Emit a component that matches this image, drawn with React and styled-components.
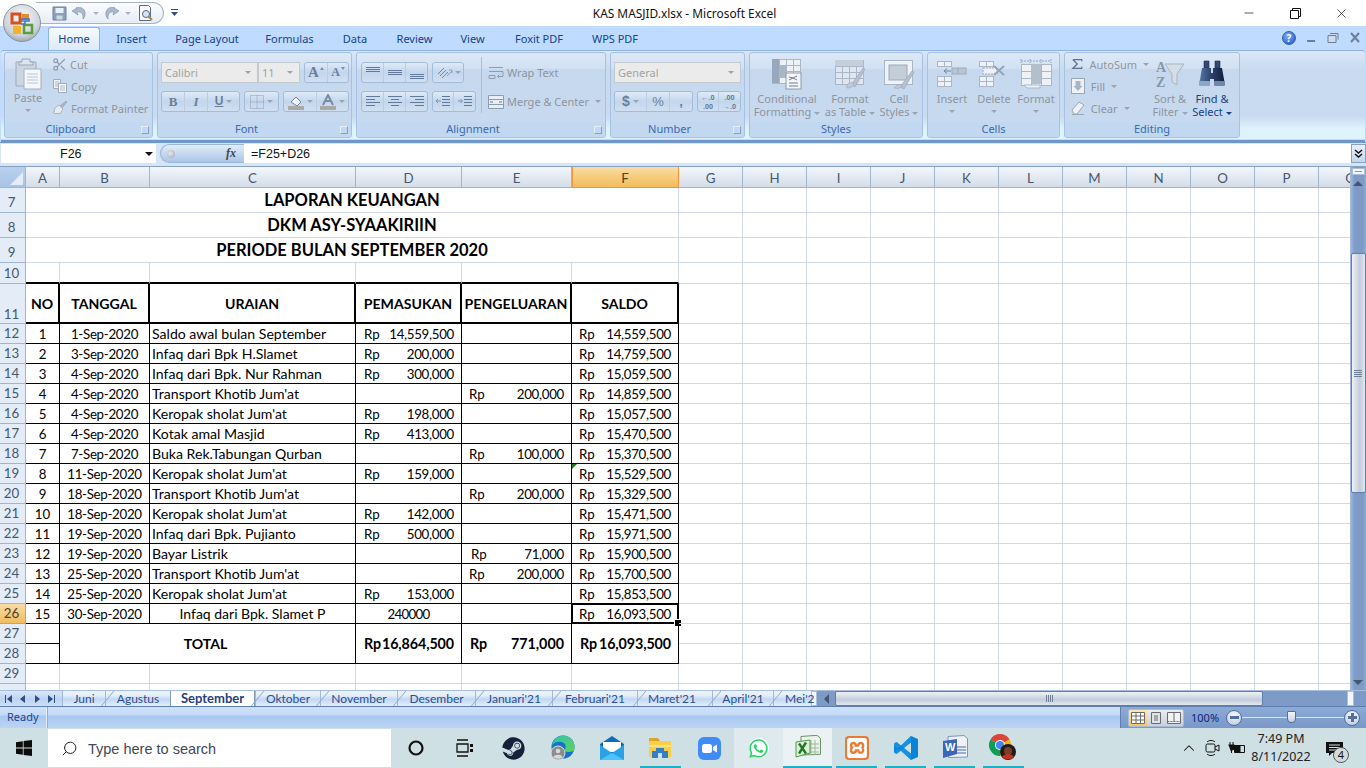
import React from 'react';
import styled, { createGlobalStyle, css } from 'styled-components';
import { FaWhatsapp, FaSteam } from 'react-icons/fa';
import { SiXampp } from 'react-icons/si';
import { Scissors, Minus, X, Search, ChevronUp } from 'lucide-react';

const UI = '"Noto Sans", sans-serif';
const SHEET = 'Lato, "Liberation Sans", sans-serif';

const Global = createGlobalStyle`
  html, body { margin: 0; padding: 0; background: #bfdbff; overflow: hidden; }
  #root { width: 1366px; height: 768px; }
  * { box-sizing: border-box; }
`;

const Page = styled.div`
  width: 1366px; height: 768px; display: flex; flex-direction: column; position: relative; overflow: hidden;
  font-family: ${UI}; background: #bfdbff;
`;

/* ---------- title bar ---------- */
const TitleBar = styled.div`
  height: 26px; background: #fff; display: flex; align-items: center; position: relative; flex: none;
`;
const Orb = styled.svg`position: absolute; left: 3px; top: 4px; z-index: 5;`;
const Qat = styled.div`
  margin-left: 36px; height: 22px; width: 128px; border: 1px solid #a9b4c2; border-left: none; border-radius: 0 12px 12px 0;
  background: linear-gradient(#fbfcfe, #e6edf6); display: flex; align-items: center; padding-left: 14px;
`;
const QatSlot = styled.span`display: flex; align-items: center; justify-content: center; width: ${p => p.$w}px; height: 20px;`;
const QatMore = styled.span`margin-left: 6px; display: flex;`;
const Title = styled.div`
  position: absolute; left: 0; right: 0; top: 5px; text-align: center; font-size: 11.9px; line-height: 17px; color: #111; padding-left: 3px; pointer-events: none;
`;
const WinBtns = styled.div`margin-left: auto; display: flex; padding-right: 2px;`;
const WinBtn = styled.span`width: 46px; height: 26px; display: flex; align-items: center; justify-content: center; color: #111;`;

/* ---------- ribbon tabs ---------- */
const TabRow = styled.div`height: 24px; flex: none; background: #bfdbff; display: flex; padding-left: 48px; align-items: flex-end; position: relative;`;
const RibbonTab = styled.div`
  width: ${p => p.$w}px; margin-right: ${p => p.$mr || 0}px; height: 23px; text-align: center; font-size: 11px; line-height: 23px; color: #15428b;
  ${p => p.$on && css`
    background: linear-gradient(#f7fbff, #dce9f8); border: 1px solid #8db2e3; border-bottom: none; border-radius: 3px 3px 0 0; line-height: 21px;
  `}
`;
const HelpArea = styled.div`margin-left: auto; display: flex; align-items: center; height: 24px; padding-right: 4px; gap: 9px;`;
const HelpDot = styled.span`
  width: 14px; height: 14px; border-radius: 50%; background: radial-gradient(circle at 40% 35%, #7fb0f5, #1a4fc4); border: 1px solid #2b5fc0; color: #fff;
  font: bold 10px/12px ${UI}; text-align: center;
`;

/* ---------- ribbon ---------- */
const Ribbon = styled.div`
  height: 92px; flex: none; margin: 0 1px 0 1px; padding: 1px 3px 0 3px; display: flex; gap: 4px;
  background: linear-gradient(#d9e7f7 0, #c9dbf0 20%, #c9dbf0 72%, #dff3fb 86%, #dff3fb 97%, #6f97cb 98%); border-radius: 3px 3px 0 0; border-top: 1px solid #8db2e3;
`;
const Group = styled.div`
  width: ${p => p.$w}px; height: 86px; flex: none; border: 1px solid #a6c1e2; border-radius: 3px; display: flex; flex-direction: column; overflow: hidden;
  background: linear-gradient(#dde8f6, #d3e1f2 18%, #c6d8ee 20%, #c8daef);
`;
const GroupBody = styled.div`flex: 1; display: flex; position: relative; min-height: 0;`;
const GroupLabel = styled.div`
  height: 15px; flex: none; background: #c1d8f0; text-align: center; font-size: 11px; line-height: 14px; color: #3a6ab0; position: relative;
  padding-right: ${p => p.$launch ? 16 : 0}px;
`;
const Launcher = styled.span`position: absolute; right: 3px; bottom: 3px; width: 8px; height: 8px; border: 1px solid #8aa2bf; border-left-color: #e8eef6; border-top-color: #e8eef6;`;
const SmallCol = styled.div`display: flex; flex-direction: column; padding: 0 0 0 ${p => p.$pl || 0}px; width: ${p => p.$w ? `${p.$w}px` : 'auto'};`;
const SmallRow = styled.div`
  height: 22px; display: flex; align-items: center; gap: 3px; font-size: 11px; color: #8e959e; white-space: nowrap;
`;
const BigBtn = styled.div`
  width: ${p => p.$w}px; margin-left: ${p => p.$ml || 0}px; flex: none; display: flex; flex-direction: column; align-items: center; font-size: 11px; line-height: 13px;
  color: ${p => p.$on ? '#15428b' : '#8e959e'}; padding-top: ${p => p.$pt ?? 4}px; white-space: nowrap; text-align: center;
`;
const BigIcon = styled.div`height: ${p => p.$h || 34}px; display: flex; align-items: center; justify-content: center; flex: none;`;
const BigLabel = styled.span`margin-top: ${p => p.$mt ?? 1}px;`;
const Caret = styled.span`
  display: inline-block; width: 0; height: 0; border: 3px solid transparent; border-top: 3px solid ${p => p.$on ? '#15428b' : '#98a4b4'}; border-bottom: none; margin-left: ${p => p.$ml ?? 3}px; vertical-align: middle; flex: none;
`;
const CaretLine = styled.div`height: 12px; display: flex; align-items: center; justify-content: center;`;
const Toolbox = styled.div`display: flex; flex-direction: column; gap: 8px; padding: 9px 0 0 ${p => p.$pl ?? 3}px;`;
const ToolRow = styled.div`display: flex; gap: ${p => p.$gap ?? 4}px; height: 21px;`;
const Combo = styled.div`
  width: ${p => p.$w}px; height: 21px; background: #ebebeb; border: 1px solid #c3c9d0; display: flex; align-items: center; justify-content: space-between; padding: 0 6px 0 3px;
  font-size: 11px; color: #a3a3a3; margin-left: ${p => p.$ml || 0}px;
`;
const BtnGroup = styled.div`
  display: flex; height: 21px; border: 1px solid #a5bcd9; border-radius: 3px; background: linear-gradient(#dfeaf7, #c3d6ed 50%, #d0e0f2); overflow: hidden; margin-left: ${p => p.$ml || 0}px;
`;
const Seg = styled.div`
  width: ${p => p.$w || 23}px; flex: none; display: flex; align-items: center; justify-content: center; border-right: 1px solid #bccde2; color: #6b7f99;
  font: ${p => p.$font || `bold 13px/19px "Liberation Serif", serif`};
  &:last-child { border-right: none; }
`;
const TinyTri = styled.span`
  width: 0; height: 0; border: 2.5px solid transparent; margin: 0 0 8px 1px;
  ${p => p.$down ? css`border-top: 3px solid #7d8ea6; border-bottom: none;` : css`border-bottom: 3px solid #7d8ea6; border-top: none;`}
`;
const Divider = styled.div`width: 1px; height: 56px; background: #aebdd0; margin: 4px 6px 0 5px; flex: none;`;
const DisabledRow = styled.div`height: 21px; display: flex; align-items: center; gap: 3px; font-size: 11px; color: #8e959e; white-space: nowrap;`;
const MiniStack = styled.span`font: 700 7px/9px ${UI}; color: #6b7f99; text-align: center; white-space: nowrap;`;
const NoteLetter = styled.text`font-family: "Liberation Serif", serif; font-weight: 700;`;

/* ---------- formula bar ---------- */
const FormulaBar = styled.div`
  height: 25px; flex: none; display: flex; padding: 1px 0 3px 0; background: #d5e4f6; border-bottom: 1px solid #87a2c1; align-items: stretch; border-top: 1px solid #6f97cb;
`;
const NameBox = styled.div`
  width: 155px; margin-left: 1px; background: #fff; display: flex; align-items: center; justify-content: space-between; padding: 0 3px 0 59px; font: 12.5px "Liberation Sans", sans-serif; color: #111;
`;
const DownTri = styled.span`width: 0; height: 0; border: 4px solid transparent; border-top: 4px solid #111; border-bottom: none;`;
const FxPill = styled.div`
  width: 84px; margin-left: 4px; border-radius: 11px 0 0 11px; background: linear-gradient(#e2edf9, #a9c5e8); border: 1px solid #9bb6d6; border-right: none; display: flex; align-items: center; justify-content: space-between; padding: 0 8px 0 6px;
`;
const FxDot = styled.span`width: 8px; height: 8px; border-radius: 50%; background: radial-gradient(circle at 40% 40%, #e8e8e8, #9aa7b7);`;
const FxText = styled.span`font: italic bold 12px "Liberation Serif", serif; color: #3c4652;`;
const FormulaInput = styled.div`
  flex: 1; background: #fff; font: 12.5px "Liberation Sans", sans-serif; color: #111; display: flex; align-items: center; padding-left: 7px;
`;
const Expand = styled.div`width: 15px; background: linear-gradient(#e9f0f9, #c3d6ed); border: 1px solid #87a2c1; display: flex; align-items: center; justify-content: center; flex: none;`;

/* ---------- sheet ---------- */
const SheetArea = styled.div`flex: 1; display: flex; min-height: 0; background: #fff; position: relative;`;
const GridWrap = styled.div`flex: 1; overflow: hidden; min-width: 0;`;
const SheetGrid = styled.div`
  display: grid; width: 1400px;
  grid-template-columns: 26px 34px 90px 206px 106px 110px 107px repeat(10, 64px) 64px;
  grid-template-rows: 21px 25px 25px 25px 21px 40px repeat(18, 20px) 20px;
  font-family: ${SHEET}; font-size: 13.3px; color: #000;
`;
const Corner = styled.div`
  border-right: 1px solid #9eb6ce; border-bottom: 1px solid #9eb6ce; display: flex; align-items: flex-end; justify-content: flex-end; padding: 2px;
  background: linear-gradient(#b9d1ee, #a7c3e6);
`;
const CornerTri = styled.span`width: 0; height: 0; border-style: solid; border-width: 0 0 13px 13px; border-color: transparent transparent #e4ecf7 transparent;`;
const ColHead = styled.div`
  display: flex; align-items: center; justify-content: center; border-right: 1px solid #9eb6ce; border-bottom: 1px solid #9eb6ce;
  background: linear-gradient(#f4f7fb, #e5ebf3 45%, #d4dce8); color: #44586f; padding-top: 1px; overflow: hidden;
  ${p => p.$on && css`
    background: linear-gradient(#f9dca6, #f5c974 60%, #f1bc5c); border-right-color: #f29536; border-bottom-color: #f29536; box-shadow: inset 1px 0 #f29536; color: #4a4030;
  `}
`;
const RowHead = styled.div`
  display: flex; align-items: flex-end; justify-content: center; border-right: 1px solid #9eb6ce; border-bottom: 1px solid #9eb6ce; padding-bottom: ${p => p.$pb ?? 1}px; padding-right: 2px;
  background: #e4ecf7; color: #44586f; line-height: 17px;
  ${p => p.$on && css`background: linear-gradient(#f9dca6, #f1bc5c); border-right-color: #f29536; border-bottom-color: #f29536; color: #4a4030;`}
`;
const Cell = styled.div`
  display: flex; align-items: center; min-width: 0; white-space: nowrap; position: relative; overflow: visible;
  justify-content: ${p => p.$align || 'flex-start'};
  padding: 0 ${p => p.$pr ?? 0}px ${p => p.$pbm ?? 0}px ${p => p.$pl ?? 0}px;
  border-right: ${p => p.$r ? `${p.$r}px solid #000` : '1px solid #d0d7e5'};
  border-bottom: ${p => p.$b ? `${p.$b}px solid #000` : '1px solid #d0d7e5'};
  grid-column: span ${p => p.$cs || 1}; grid-row: span ${p => p.$rs || 1};
  font-weight: ${p => p.$bold ? 700 : 400};
  font-size: ${p => p.$fs ? `${p.$fs}px` : 'inherit'};
  letter-spacing: ${p => p.$ls ?? 0}px;
  ${p => p.$acct && css`justify-content: space-between;`}
  ${p => p.$note && css`&::before { content: ''; position: absolute; left: 0; top: 0; border-style: solid; border-width: 5px 5px 0 0; border-color: #1f7a1f transparent transparent transparent; }`}
`;
const Amount = styled.span`letter-spacing: ${p => p.$ls ?? -0.3}px;`;
const Selection = styled.span`
  position: absolute; left: -1px; top: -1px; right: -1px; bottom: -1px; border: 2px solid #000; pointer-events: none;
`;
const FillHandle = styled.span`
  position: absolute; right: -3px; bottom: -3px; width: 6px; height: 6px; background: #000; border: 1px solid #fff; box-sizing: content-box; margin: -1px;
`;

const VScroll = styled.div`
  width: 16px; flex: none; background: linear-gradient(90deg, #a6bedf, #7d9bc6 30%, #7d9bc6 80%, #90abd1); display: flex; flex-direction: column; align-items: center; position: relative; height: 523px;
`;
const SplitBox = styled.div`width: 13px; height: 7px; margin-top: 1px; background: #f4f8fc; border: 1px solid #a9bfdc; display: flex; align-items: center; justify-content: center;`;
const SplitLine = styled.span`width: 7px; height: 1px; background: #7d9bc6;`;
const TriUp = styled.span`width: 0; height: 0; border: 5px solid transparent; border-top: none; border-bottom: 5px solid #46566c; margin-top: 6px;`;
const TriDown = styled.span`width: 0; height: 0; border: 5px solid transparent; border-bottom: none; border-top: 5px solid #46566c; margin-top: auto; margin-bottom: 5px;`;
const VThumb = styled.div`
  width: 15px; height: 240px; margin-top: 67px; border: 1px solid #5f7ea8; border-radius: 2px; display: flex; align-items: center; justify-content: center; flex: none;
  background: linear-gradient(90deg, #eef1f6, #cfd6e2 45%, #c2ccdb 60%, #e3e7ee);
`;
const Grip = styled.span`width: 8px; height: 7px; background: repeating-linear-gradient(#6f7f95 0 1px, transparent 1px 2px);`;

/* ---------- sheet tabs ---------- */
const TabBar = styled.div`
  height: 17px; flex: none; display: flex; background: linear-gradient(#dbe7f7, #bcd3f2 55%, #cfdff5); border-top: 1px solid #a7bfdf; border-bottom: 1px solid #5d7fb0; position: relative; overflow: hidden;
`;
const NavArrows = styled.div`width: 62px; flex: none; display: flex; align-items: center; padding-left: 5px; gap: 6px; color: #2d4e80;`;
const SheetTab = styled.div`
  width: ${p => p.$w}px; flex: none; position: relative; text-align: ${p => p.$left ? 'left' : 'center'}; font-size: 12px; line-height: 15px; color: #2a4f92; font-family: ${SHEET};
  padding: 0 ${p => p.$pr || 0}px 0 ${p => p.$pl || 0}px; white-space: nowrap;
  background: linear-gradient(#eef4fb, #e3edf9 30%, #c2d7f3 55%, #e4eefa);
  border-left: 1px solid #a2b9d8;
  ${p => p.$on && css`background: #fff; font-weight: 700; color: #1f3f7f; font-size: 13px; border-left: 1px solid #7f9db9; border-right: 1px solid #7f9db9;`}
`;
const TabSlant = styled.span`
  position: absolute; left: -6px; bottom: -1px; width: 1px; height: 18px; background: #8fa9cb; transform: skewX(-40deg); transform-origin: bottom;
`;
const MiniSplit = styled.div`width: 6px; flex: none; background: #f4f8fc; border: 1px solid #a9bfdc;`;
const HScroll = styled.div`flex: 1; background: #7d9bc6; display: flex; align-items: center; padding-left: 3px; position: relative;`;
const TriLeft = styled.span`width: 0; height: 0; border: 5px solid transparent; border-left: none; border-right: 5px solid #46566c; margin-left: 4px;`;
const TriRight = styled.span`width: 0; height: 0; border: 5px solid transparent; border-right: none; border-left: 5px solid #46566c; margin-left: auto; margin-right: 13px;`;
const HThumb = styled.div`
  width: 428px; height: 15px; margin-left: 6px; border-radius: 2px; display: flex; align-items: center; justify-content: center; border: 1px solid #5f7ea8;
  background: linear-gradient(#eef1f6, #cfd6e2 45%, #c2ccdb 60%, #e3e7ee);
`;
const HGrip = styled.span`width: 7px; height: 7px; background: repeating-linear-gradient(90deg, #6f7f95 0 1px, transparent 1px 2px);`;
const HSplit = styled.span`position: absolute; right: 12px; top: 0; width: 7px; height: 15px; background: #f4f8fc; border: 1px solid #a9bfdc;`;

/* ---------- status ---------- */
const StatusBar = styled.div`
  height: 21px; flex: none; display: flex; align-items: stretch; background: linear-gradient(#cfe1fa, #c6dbf8 35%, #a9c8f0 45%, #bcd4f5); font-size: 11px; color: #24448a;
`;
const Ready = styled.div`width: 47px; border-right: 1px solid #e4eefb; padding-left: 7px; line-height: 20px; box-shadow: 1px 0 #8eaed8;`;
const StatusRight = styled.div`
  margin-left: auto; width: 246px; display: flex; align-items: center; padding-left: 7px; background: linear-gradient(#8dabd6, #7998c8); border-left: 1px solid #5d7fb0;
`;
const ViewBtns = styled.div`display: flex; height: 18px; border-radius: 2px; overflow: hidden; border: 1px solid #a6bcd9;`;
const ViewBtn = styled.span`width: 18px; display: flex; align-items: center; justify-content: center; background: ${p => p.$on ? 'linear-gradient(#fde9b0,#f6c55f)' : 'linear-gradient(#e9edf3,#c7d0dc)'};`;
const ZoomPct = styled.span`margin-left: 7px; color: #10267a; font-size: 11px; width: 33px;`;
const RoundBtn = styled.span`
  width: 16px; height: 16px; border-radius: 50%; border: 1px solid #53709c; background: radial-gradient(circle at 50% 30%, #f6f8fb, #b9c8dd); display: flex; align-items: center; justify-content: center; margin-left: ${p => p.$ml || 0}px; flex: none;
`;
const Track = styled.span`width: 102px; height: 1px; background: #dbe6f5; position: relative; flex: none;`;
const Knob = styled.span`position: absolute; left: 45px; top: -6px; width: 9px; height: 12px; background: linear-gradient(#f5f7fa,#c2cfdf); border: 1px solid #53709c; border-radius: 1px 1px 4px 4px;`;

/* ---------- taskbar ---------- */
const Taskbar = styled.div`height: 40px; flex: none; background: #cfe0e4; display: flex; align-items: stretch;`;
const StartBtn = styled.div`width: 48px; display: flex; align-items: center; justify-content: center;`;
const SearchBox = styled.div`width: 343px; margin: 1px 0; background: #fff; display: flex; align-items: center; padding: 1px 0 0 13px; gap: 10px; font: 14.5px "Liberation Sans", sans-serif; color: #3e4a55;`;
const Tile = styled.div`
  width: 49px; flex: none; display: flex; align-items: center; justify-content: center; position: relative;
  background: ${p => p.$bg || 'transparent'}; padding-top: ${p => p.$pt ?? 0}px;
  ${p => p.$run && css`&::after { content: ''; position: absolute; left: ${p.$wide ? 0 : 4}px; right: ${p.$wide ? 0 : 4}px; bottom: 0; height: 2px; background: #1fb0c4; }`}
`;
const Tray = styled.div`margin-left: auto; display: flex; align-items: center; color: #111;`;
const TrayIcon = styled.span`width: ${p => p.$w || 24}px; display: flex; align-items: center; justify-content: center;`;
const Clock = styled.div`width: 70px; margin-left: -3px; text-align: center; font-size: 12.5px; line-height: 18px; color: #222;`;
const Notif = styled.div`width: 50px; height: 40px; position: relative; padding: 12px 0 0 10px;`;
const NotifBadge = styled.span`position: absolute; left: 17px; top: 19px; width: 16px; height: 16px; border-radius: 50%; background: #d2dcdf; border: 1px solid #555; font: 11px/14px ${UI}; text-align: center; color: #111;`;

/* ---------- icons ---------- */
const G = '#8f9db0';
const PasteIcon = () => (
  <svg width="28" height="33" viewBox="0 0 28 33">
    <path d="M2 5h20v24H2z" fill="#ccd6e3" stroke="#9dabbd" />
    <path d="M8 5V2h8v3h3v3H5V5z" fill="#dde4ed" stroke="#98a6b9" />
    <path d="M10 12h17v20H10z" fill="#f3f6fa" stroke="#a4b1c2" />
    <path d="M13 17h11M13 20h11M13 23h11M13 26h11" stroke="#bcc6d3" />
  </svg>
);
const CopyIcon = () => (
  <svg width="16" height="16" viewBox="0 0 16 16">
    <path d="M1.5 1.5h7v9h-7z" fill="#eef2f7" stroke="#9dabbd" /><path d="M3 4h4M3 6h4M3 8h4" stroke="#aeb9c8" />
    <path d="M6.5 5.5h8v9h-8z" fill="#f6f8fb" stroke="#9dabbd" /><path d="M8 8h5M8 10h5M8 12h5" stroke="#aeb9c8" />
  </svg>
);
const BrushIcon = ({ s = 16 }) => (
  <svg width={s} height={s} viewBox="0 0 16 16">
    <path d="M8 6l6-5 1 1-5 6z" fill="#aab6c6" stroke="#8f9db0" strokeWidth=".6" />
    <path d="M3 8l4-3 4 4-3 5-2-1-1 1-1-1-1 1-2-2 2-1-1-1z" fill="#e6ebf2" stroke="#9dabbd" strokeWidth=".8" />
  </svg>
);
const Lines = ({ kind, valign = 'center' }) => {
  const y0 = valign === 'top' ? 2 : valign === 'bottom' ? 9 : 5;
  const list = kind === 'v'
    ? [0, 2, 4].map(i => [1, y0 + i, 15])
    : [0, 3, 6, 9].map(i => {
        const short = i % 6 === 3;
        if (kind === 'l') return [1, 2 + i, short ? 10 : 15];
        if (kind === 'r') return [short ? 6 : 1, 2 + i, 15];
        return [short ? 4 : 1, 2 + i, short ? 12 : 15];
      });
  return (
    <svg width="16" height="15" viewBox="0 0 16 15">
      {list.map(([a, y, b], i) => <path key={i} d={`M${a} ${y + .5}H${b}`} stroke="#62799a" />)}
    </svg>
  );
};
const IndentIcon = ({ out }) => (
  <svg width="16" height="15" viewBox="0 0 16 15">
    <path d="M7 2.5h8M7 5.5h8M7 8.5h8M7 11.5h8" stroke="#62799a" />
    <path d={out ? 'M6 7H1M3 5L1 7l2 2' : 'M1 7h4M3.5 5l2 2-2 2'} stroke="#7f95b3" fill="none" />
  </svg>
);
const OrientIcon = () => (
  <svg width="18" height="15" viewBox="0 0 18 15">
    <path d="M2 9l6-6M4 11l6-6M6 13l6-6" stroke="#78879a" /><path d="M11 11l5-5M13 5h3v3" stroke="#8ba2c0" fill="none" />
  </svg>
);
const WrapIcon = () => (
  <svg width="16" height="16" viewBox="0 0 16 16">
    <path d="M1 2.5h14M1 6.5h11M1 10.5h6v3H1z" stroke="#8e9cb0" fill="none" />
    <path d="M12 6.5h3v5h-5M11.5 9.5L9.5 11.5l2 1.5" stroke="#8e9cb0" fill="none" />
  </svg>
);
const MergeIcon = () => (
  <svg width="16" height="14" viewBox="0 0 16 14">
    <path d="M.5.5h15v13H.5zM.5 4.5h15M.5 9.5h15" stroke="#8e9cb0" fill="#e8eef6" />
    <path d="M2 7h3M14 7h-3" stroke="#64788f" />
  </svg>
);
const CellGrid = ({ x = 0, y = 0, c = 3, r = 3, w = 8, h = 6, fill = '#eef2f7', stroke = '#a9b7c8' }) => (
  <g>
    {Array.from({ length: c * r }).map((_, i) => (
      <rect key={i} x={x + (i % c) * w + .5} y={y + Math.floor(i / c) * h + .5} width={w} height={h} fill={fill} stroke={stroke} />
    ))}
  </g>
);
const CondIcon = () => (
  <svg width="32" height="32" viewBox="0 0 32 32">
    <CellGrid x={1} y={1} c={4} r={4} w={7} h={6} />
    <rect x="1" y="1" width="7" height="24" fill="#98a7ba" /><rect x="8" y="7" width="7" height="12" fill="#a9b6c6" />
    <rect x="15" y="15" width="15" height="16" fill="#f3f6fa" stroke="#8d9bad" />
    <path d="M18 19l4 1-4 2M26 18l-4 2 4 2M18 25h9M18 28h9" stroke="#6f7e92" fill="none" />
  </svg>
);
const TableIcon = () => (
  <svg width="32" height="32" viewBox="0 0 32 32">
    <CellGrid x={1} y={2} c={4} r={4} w={7} h={6} fill="#e0e6ee" />
    <rect x="1" y="2" width="28" height="6" fill="#c5cfdb" />
    <path d="M17 27l12-17 2 1-10 18z" fill="#b6c1cf" stroke="#96a4b6" strokeWidth=".6" />
    <path d="M13 27c2-3 5-3 7-2-1 3-2 5-7 5z" fill="#bfc9d6" stroke="#9aa7b8" strokeWidth=".6" />
  </svg>
);
const StyleIcon = () => (
  <svg width="32" height="32" viewBox="0 0 32 32">
    <rect x="1.5" y="2.5" width="28" height="24" fill="#eff3f8" stroke="#a9b7c8" />
    <rect x="6" y="7" width="18" height="15" fill="#c4ced9" stroke="#9ba9ba" />
    <path d="M17 29l12-16 2 1-10 17z" fill="#b6c1cf" stroke="#96a4b6" strokeWidth=".6" />
    <path d="M11 30c2-3 5-4 8-3-1 3-3 4-8 3z" fill="#bfc9d6" stroke="#9aa7b8" strokeWidth=".6" />
  </svg>
);
const InsertIcon = () => (
  <svg width="32" height="28" viewBox="0 0 32 28">
    <CellGrid x={1} y={1} c={2} r={1} w={7} h={5} /><CellGrid x={1} y={16} c={2} r={2} w={7} h={5} />
    <rect x="16" y="8" width="14" height="6" fill="#b9c5d3" stroke="#9eabbb" /><path d="M22 8v6" stroke="#9eabbb" />
    <path d="M15 11H8M11 8.5L8 11l3 2.5" stroke="#77869a" fill="none" />
  </svg>
);
const DeleteIcon = () => (
  <svg width="32" height="28" viewBox="0 0 32 28">
    <CellGrid x={1} y={1} c={2} r={1} w={7} h={5} /><CellGrid x={1} y={16} c={2} r={2} w={7} h={5} />
    <rect x="5" y="8" width="14" height="6" fill="#eef2f7" stroke="#9eabbb" strokeDasharray="2 1" />
    <path d="M16 6l10 9M26 6l-10 9" stroke="#98a5b6" strokeWidth="2" />
  </svg>
);
const FormatIcon = () => (
  <svg width="32" height="32" viewBox="0 0 32 32">
    <path d="M1 3h30M1 1v4M31 1v4M10 1v4M21 1v4" stroke="#98a5b6" strokeDasharray="2 1" />
    <CellGrid x={1} y={6} c={3} r={3} w={10} h={7} />
    <rect x="11" y="6" width="10" height="20" fill="#b4bfcc" />
    <path d="M4 27h16v3H7z" fill="#eef2f7" stroke="#a9b7c8" />
  </svg>
);
const SortIcon = () => (
  <svg width="30" height="30" viewBox="0 0 30 30">
    <NoteLetter x="1" y="13" fontSize="14" fill="#8796aa">A</NoteLetter>
    <NoteLetter x="1" y="28" fontSize="14" fill="#8796aa">Z</NoteLetter>
    <path d="M10 5h19l-7 10v11l-5-3v-8z" fill="#d5dde8" stroke="#a8b5c5" />
  </svg>
);
const Binoculars = () => (
  <svg width="28" height="28" viewBox="0 0 28 28">
    <defs><linearGradient id="bn" x1="0" x2="1"><stop offset="0" stopColor="#5678a8" /><stop offset=".5" stopColor="#2b4068" /><stop offset="1" stopColor="#0f1c38" /></linearGradient></defs>
    <path d="M6 1h5v7H6zM17 1h5v7h-5z" fill="#33486f" stroke="#1c2b4a" strokeWidth=".6" />
    <path d="M4 8h9v5h2V8h9l3 17H16v-6h-4v6H1z" fill="url(#bn)" />
    <rect x="1" y="21" width="11" height="5" rx="1" fill="#8ea5c6" /><rect x="16" y="21" width="11" height="5" rx="1" fill="#6f87ab" />
  </svg>
);
const SaveIcon = () => (
  <svg width="15" height="15" viewBox="0 0 15 15"><path d="M1 1h13v13H1z" fill="#8ba0ba" stroke="#6f829b" /><path d="M3.5 2h8v5h-8z" fill="#eaf0f7" /><path d="M4.5 9.5h6v4h-6z" fill="#cfd9e5" /></svg>
);
const UndoIcon = ({ flip }) => (
  <svg width="16" height="16" viewBox="0 0 16 16" style={flip ? { transform: 'scaleX(-1)' } : undefined}>
    <path d="M5 3C10 1 15 4 14 10c-.3 1.6-1 3-2 4 .5-4-1-8-6-7l1 3-6-4 5-3z" fill="#a7bad1" stroke="#8296b0" strokeWidth=".7" />
  </svg>
);
const PreviewIcon = () => (
  <svg width="18" height="18" viewBox="0 0 18 18"><path d="M2.5 1.5h9l2 2v13h-11z" fill="#f7f9fc" stroke="#5b6a80" /><circle cx="9" cy="10" r="3.5" fill="#d8e5f4" stroke="#56677f" /><path d="M11.5 12.5l3.5 3.5" stroke="#c2812c" strokeWidth="2" /></svg>
);
const SmallCaret = () => (
  <svg width="8" height="8" viewBox="0 0 8 8"><path d="M1 3h6L4 6z" fill="#a8b5c6" /></svg>
);

const WinLogo = () => (
  <svg width="16" height="16" viewBox="0 0 16 16"><path d="M0 2.2L6.8 1.2V7.6H0zM7.6 1.1L16 0v7.6H7.6zM0 8.4H6.8V14.8L0 13.8zM7.6 8.4H16V16L7.6 14.9z" fill="#0c0c0c" /></svg>
);
const TaskView = () => (
  <svg width="18" height="18" viewBox="0 0 18 18"><path d="M1 1h11M1 17h11M1 5h11v8H1z" stroke="#111" fill="none" strokeWidth="1.3" /><rect x="14" y="5" width="3" height="3" fill="#111" /><rect x="14" y="10" width="3" height="3" fill="#111" /></svg>
);
const EdgeIcon = () => (
  <svg width="26" height="26" viewBox="0 0 26 26">
    <defs>
      <linearGradient id="eg" x1="0" y1="0" x2="1" y2="1"><stop offset="0" stopColor="#2fc3b0" /><stop offset="1" stopColor="#5fd35a" /></linearGradient>
    </defs>
    <circle cx="13" cy="12" r="11.5" fill="#1473c8" />
    <path d="M2 11C3 3 10 .5 13 .5 20 .5 25 6 24.5 13c0 3-3 4-6 4-3 0-5-1-4-2 2-2 2-7-3-8C7 6 3 8 2 11z" fill="url(#eg)" />
    <circle cx="8" cy="18" r="7" fill="#8a8d90" stroke="#cfe0e4" strokeWidth="1" />
    <circle cx="8" cy="16" r="2.3" fill="#d8d8d8" /><path d="M3.5 22c1-3 8-3 9 0-2 2.4-7 2.4-9 0z" fill="#d8d8d8" />
  </svg>
);
const MailIcon = () => (
  <svg width="26" height="24" viewBox="0 0 26 24">
    <path d="M1 8L13 0l12 8v16H1z" fill="#0f6cbd" />
    <path d="M4 6h18v10H4z" fill="#fff" />
    <path d="M1 9l12 8 12-8v15H1z" fill="#2aa3e6" />
    <path d="M1 24l12-7 12 7z" fill="#4fc3f7" />
  </svg>
);
const FolderIcon = () => (
  <svg width="24" height="20" viewBox="0 0 24 20">
    <path d="M0 0h9l2 3h-11z" fill="#e0a32a" /><path d="M0 3h22v16H0z" fill="#f9cf47" />
    <path d="M0 7h22v2H0z" fill="#fbe07e" />
    <path d="M7 10h8v3h4v7H3v-7h4z" fill="#2f7fc9" /><path d="M9 15h4v5H9z" fill="#cfe3f6" />
  </svg>
);
const ZoomIcon = () => (
  <svg width="23" height="23" viewBox="0 0 23 23"><rect width="23" height="23" rx="6" fill="#3f8bf8" /><rect x="4" y="7" width="10" height="9" rx="2.5" fill="#fff" /><path d="M15 10l4-2.5v8L15 13z" fill="#fff" /></svg>
);
const WaIcon = () => (
  <svg width="20" height="20" viewBox="0 0 20 20"><circle cx="10" cy="10" r="10" fill="#fff" /></svg>
);
const ExcelIcon = () => (
  <svg width="26" height="26" viewBox="0 0 26 26">
    <path d="M6 1.5l16-1.2 3.5 3v16L6 20z" fill="#eef2ee" stroke="#6e8f6a" />
    <path d="M12 9h12M12 13h12M12 17h12M16 5v15M20 5v15" stroke="#9dbb98" />
    <path d="M1 7l14-2v13L1 22z" fill="#dff0d8" stroke="#4f9a4a" />
    <path d="M4 8.5l7 10M11 7.5l-7 11" stroke="#207a2a" strokeWidth="2.4" />
  </svg>
);
const VsIcon = () => (
  <svg width="24" height="24" viewBox="0 0 24 24">
    <path d="M17 0l7 3v18l-7 3-10-9.5L2.5 18 0 16.5V7.5L2.5 6 7 9.5z" fill="#0a84d6" />
    <path d="M17 6.5L10 12l7 5.5z" fill="#cfe0e4" />
    <path d="M0 7.5L2.5 6 17 18v6L0 9.5zM0 16.5L2.5 18 17 6V0z" fill="#1f9cf0" opacity=".55" />
  </svg>
);
const WordIcon = () => (
  <svg width="26" height="26" viewBox="0 0 26 26">
    <path d="M6 1.5l16-1 3.5 3v18.5l-19 .5z" fill="#eef2f8" stroke="#7f94b7" />
    <path d="M13 12h11M13 15h11M13 18h11" stroke="#4468b0" />
    <path d="M1 6l14-2v15L1 23z" fill="#3c67b8" />
    <text x="3" y="16" fontSize="11" fontWeight="700" fill="#fff" fontFamily="Liberation Sans, sans-serif">W</text>
  </svg>
);
const ChromeIcon = () => (
  <svg width="34" height="34" viewBox="0 0 34 34">
    <path d="M13 13L3.47 7.5A11 11 0 0 1 22.53 7.5z" fill="#db4437" />
    <path d="M13 13L22.53 7.5A11 11 0 0 1 13 24z" fill="#f4b400" />
    <path d="M13 13L13 24A11 11 0 0 1 3.47 7.5z" fill="#0f9d58" />
    <circle cx="13" cy="13" r="5" fill="#fff" /><circle cx="13" cy="13" r="4" fill="#4285f4" />
    <circle cx="21" cy="20" r="8" fill="#1c1c1c" /><circle cx="21" cy="19" r="4" fill="#7a3f2a" /><path d="M15 25c2-4 10-4 12 0-3 3-9 3-12 0z" fill="#c2331f" />
  </svg>
);
const MeetIcon = () => (
  <svg width="16" height="18" viewBox="0 0 16 18">
    <rect x="1" y="5" width="9" height="8" rx="1.5" fill="none" stroke="#111" />
    <path d="M10 8l4-2v6l-4-2" fill="none" stroke="#111" />
    <path d="M2 3c2-2 6-2 8 0M2 15c2 2 6 2 8 0" fill="none" stroke="#111" />
  </svg>
);
const OrbSvg = () => (
  <Orb width="38" height="38" viewBox="0 0 38 38">
    <defs>
      <radialGradient id="ob" cx=".5" cy=".35" r=".7"><stop offset="0" stopColor="#f7f8fa" /><stop offset=".7" stopColor="#cdd3da" /><stop offset="1" stopColor="#8f98a3" /></radialGradient>
    </defs>
    <circle cx="19" cy="19" r="18.5" fill="url(#ob)" stroke="#8b95a1" />
    <path d="M9 10h8v9H9z" fill="none" stroke="#d8501a" strokeWidth="3" />
    <path d="M19 10h7v6h-7z" fill="#e88a2a" />
    <path d="M10 22h8v8h-8z" fill="#f2b32b" />
    <path d="M21 21h8v8h-8z" fill="none" stroke="#5aa03a" strokeWidth="2.5" />
    <path d="M18 15h8v2h-8M18 20h4v-3" stroke="#3b77c9" strokeWidth="1.5" fill="none" />
  </Orb>
);

/* ---------- data ---------- */
const colNames = ['A', 'B', 'C', 'D', 'E', 'F', 'G', 'H', 'I', 'J', 'K', 'L', 'M', 'N', 'O', 'P', 'Q'];
const ledger = [
  [12, 1, '1-Sep-2020', 'Saldo awal bulan September', '14,559,500', '', '14,559,500'],
  [13, 2, '3-Sep-2020', 'Infaq dari Bpk H.Slamet', '200,000', '', '14,759,500'],
  [14, 3, '4-Sep-2020', 'Infaq dari Bpk. Nur Rahman', '300,000', '', '15,059,500'],
  [15, 4, '4-Sep-2020', "Transport Khotib Jum'at", '', '200,000', '14,859,500'],
  [16, 5, '4-Sep-2020', "Keropak sholat Jum'at", '198,000', '', '15,057,500'],
  [17, 6, '4-Sep-2020', 'Kotak amal Masjid', '413,000', '', '15,470,500'],
  [18, 7, '7-Sep-2020', 'Buka Rek.Tabungan Qurban', '', '100,000', '15,370,500'],
  [19, 8, '11-Sep-2020', "Keropak sholat Jum'at", '159,000', '', '15,529,500'],
  [20, 9, '18-Sep-2020', "Transport Khotib Jum'at", '', '200,000', '15,329,500'],
  [21, 10, '18-Sep-2020', "Keropak sholat Jum'at", '142,000', '', '15,471,500'],
  [22, 11, '19-Sep-2020', 'Infaq dari Bpk. Pujianto', '500,000', '', '15,971,500'],
  [23, 12, '19-Sep-2020', 'Bayar Listrik', '', '71,000', '15,900,500'],
  [24, 13, '25-Sep-2020', "Transport Khotib Jum'at", '', '200,000', '15,700,500'],
  [25, 14, '25-Sep-2020', "Keropak sholat Jum'at", '153,000', '', '15,853,500'],
];
const sheetTabs = [
  { t: 'Juni', w: 43 }, { t: 'Agustus', w: 65 }, { t: 'September', w: 85, on: true }, { t: 'Oktober', w: 65 },
  { t: 'November', w: 77 }, { t: 'Desember', w: 78 }, { t: "Januari'21", w: 77 }, { t: "Februari'21", w: 85 },
  { t: "Maret'21", w: 75, pr: 6 }, { t: "April'21", w: 61 }, { t: "Mei'2", w: 38, left: true, pl: 11 },
];
const ribbonTabs = [['Home', 52, true, 3], ['Insert', 57, false, 2], ['Page Layout', 90], ['Formulas', 75], ['Data', 56], ['Review', 63], ['View', 53], ['Foxit PDF', 80], ['WPS PDF', 72]];

const Blanks = ({ n, row }) => Array.from({ length: n }).map((_, i) => <Cell key={`${row}-${i}`} />);

const Acct = ({ v, pl, pr, bold, fs, rs, ls }) => (
  <Cell $r={1} $b={1} $acct={!!v} $pl={pl} $pr={pr} $bold={bold} $fs={fs} $rs={rs}>
    {v ? <><span>Rp</span><Amount $ls={ls}>{v}</Amount></> : null}
  </Cell>
);

const SheetRows = () => (
  <SheetGrid>
    <Corner><CornerTri /></Corner>
    {colNames.map(c => <ColHead key={c} $on={c === 'F'}>{c}</ColHead>)}

    {[[7, 'LAPORAN KEUANGAN'], [8, 'DKM ASY-SYAAKIRIIN'], [9, 'PERIODE BULAN SEPTEMBER 2020']].map(([n, t]) => (
      <React.Fragment key={n}>
        <RowHead>{n}</RowHead>
        <Cell $cs={6} $align="center" $bold $fs={16.5} $pr={0} $pbm={0}>{t}</Cell>
        <Blanks n={11} row={n} />
      </React.Fragment>
    ))}

    <RowHead>10</RowHead>
    {[0, 1, 2, 3, 4, 5].map(i => <Cell key={i} $b={2} />)}
    <Blanks n={11} row={10} />

    <RowHead $pb={0}>11</RowHead>
    {['NO', 'TANGGAL', 'URAIAN', 'PEMASUKAN', 'PENGELUARAN', 'SALDO'].map(h => (
      <Cell key={h} $r={2} $b={2} $align="center" $bold $fs={14.1}>{h}</Cell>
    ))}
    <Blanks n={11} row={11} />

    {ledger.map(([row, no, date, desc, inc, out, bal]) => (
      <React.Fragment key={row}>
        <RowHead>{row}</RowHead>
        <Cell $r={1} $b={1} $align="center">{no}</Cell>
        <Cell $r={1} $b={1} $align="center" $ls={-0.3}>{date}</Cell>
        <Cell $r={1} $b={1} $pl={2} $fs={14.1}>{desc}</Cell>
        <Acct v={inc} pl={8} pr={7} />
        <Acct v={out} pl={row === 23 ? 9 : 7} pr={7} />
        <Cell $r={1} $b={1} $acct $pl={7} $pr={7} $note={row === 19}><span>Rp</span><Amount>{bal}</Amount></Cell>
        <Blanks n={11} row={row} />
      </React.Fragment>
    ))}

    <RowHead $on>26</RowHead>
    <Cell $r={1} $b={1} $align="center">15</Cell>
    <Cell $r={1} $b={1} $align="center" $ls={-0.3}>30-Sep-2020</Cell>
    <Cell $r={1} $b={1} $align="center" $fs={14}>Infaq dari Bpk. Slamet P</Cell>
    <Cell $r={1} $b={1} $align="center" $ls={-0.7}>240000</Cell>
    <Cell $r={1} $b={1} />
    <Cell $r={1} $b={1} $acct $pl={7} $pr={7}>
      <span>Rp</span><Amount>16,093,500</Amount>
      <Selection /><FillHandle />
    </Cell>
    <Blanks n={11} row={26} />

    <RowHead>27</RowHead>
    <Cell $r={1} $b={1} />
    <Cell $r={1} $b={1} $cs={2} $rs={2} $align="center" $bold $fs={14.1} $pr={4}>TOTAL</Cell>
    <Acct v="16,864,500" pl={8} pr={7} bold fs={14.3} rs={2} ls={-0.1} />
    <Acct v="771,000" pl={8} pr={7} bold fs={14.3} rs={2} ls={0} />
    <Acct v="16,093,500" pl={8} pr={7} bold fs={14.3} rs={2} ls={-0.1} />
    <Blanks n={11} row={27} />

    <RowHead>28</RowHead>
    <Cell $r={1} $b={1} />
    <Blanks n={11} row={28} />

    <RowHead>29</RowHead>
    <Blanks n={17} row={29} />
    <RowHead />
    <Blanks n={17} row={30} />
  </SheetGrid>
);

export default function App() {
  return (
    <Page>
      <Global />
      <TitleBar>
        <OrbSvg />
        <Qat>
          <QatSlot $w={18}><SaveIcon /></QatSlot>
          <QatSlot $w={22}><UndoIcon /></QatSlot>
          <QatSlot $w={12}><SmallCaret /></QatSlot>
          <QatSlot $w={20}><UndoIcon flip /></QatSlot>
          <QatSlot $w={12}><SmallCaret /></QatSlot>
          <QatSlot $w={24}><PreviewIcon /></QatSlot>
        </Qat>
        <QatMore>
          <svg width="9" height="10" viewBox="0 0 9 10"><path d="M1 1.5h7" stroke="#2b4f8a" /><path d="M1 4h7L4.5 8z" fill="#2b4f8a" /></svg>
        </QatMore>
        <Title>KAS MASJID.xlsx  -  Microsoft Excel</Title>
        <WinBtns>
          <WinBtn><Minus size={14} strokeWidth={1.2} /></WinBtn>
          <WinBtn>
            <svg width="11" height="11" viewBox="0 0 11 11"><path d="M.5 2.5h8v8h-8zM2.5 2.5v-2h8v8h-2" fill="none" stroke="#111" /></svg>
          </WinBtn>
          <WinBtn><X size={15} strokeWidth={1.1} /></WinBtn>
        </WinBtns>
      </TitleBar>

      <TabRow>
        {ribbonTabs.map(([t, w, on, mr]) => <RibbonTab key={t} $w={w} $on={on} $mr={mr}>{t}</RibbonTab>)}
        <HelpArea>
          <HelpDot>?</HelpDot>
          <svg width="13" height="12" viewBox="0 0 13 12"><path d="M2 9h8" stroke="#6b7f99" strokeWidth="2" /></svg>
          <svg width="13" height="12" viewBox="0 0 13 12"><path d="M1 3.5h8v7H1zM3 1.5h8v6" fill="#cfdcec" stroke="#6b7f99" /></svg>
          <svg width="13" height="12" viewBox="0 0 13 12"><path d="M2 1l8 9M10 1l-8 9" stroke="#6b7f99" strokeWidth="2" /></svg>
        </HelpArea>
      </TabRow>

      <Ribbon>
        <Group $w={149}>
          <GroupBody>
            <BigBtn $w={46} $pt={2}>
              <BigIcon $h={36}><PasteIcon /></BigIcon>
              <BigLabel $mt={0}>Paste</BigLabel>
              <CaretLine><Caret $ml={0} /></CaretLine>
            </BigBtn>
            <SmallCol $pl={1}>
              <SmallRow><Scissors size={15} color={G} />Cut</SmallRow>
              <SmallRow><CopyIcon />Copy</SmallRow>
              <SmallRow><BrushIcon />Format Painter</SmallRow>
            </SmallCol>
          </GroupBody>
          <GroupLabel $launch>Clipboard<Launcher /></GroupLabel>
        </Group>

        <Group $w={195}>
          <GroupBody>
            <Toolbox>
              <ToolRow $gap={0}>
                <Combo $w={97}>Calibri<Caret /></Combo>
                <Combo $w={42}>11<Caret /></Combo>
                <BtnGroup $ml={4}>
                  <Seg $w={23} $font={`bold 15px/19px "Liberation Serif", serif`}>A<TinyTri /></Seg>
                  <Seg $w={20} $font={`bold 12px/19px "Liberation Serif", serif`}>A<TinyTri $down /></Seg>
                </BtnGroup>
              </ToolRow>
              <ToolRow>
                <BtnGroup>
                  <Seg $w={23}>B</Seg>
                  <Seg $w={23} $font={`italic bold 13px/19px "Liberation Serif", serif`}>I</Seg>
                  <Seg $w={31} $font={`bold 12px/19px "Liberation Sans", sans-serif`}><u>U</u><Caret /></Seg>
                </BtnGroup>
                <BtnGroup>
                  <Seg $w={33}>
                    <svg width="14" height="14" viewBox="0 0 14 14"><path d="M.5.5h13v13H.5zM7 .5v13M.5 7h13" fill="none" stroke="#8d9cb0" strokeDasharray="1 1" /></svg>
                    <Caret />
                  </Seg>
                </BtnGroup>
                <BtnGroup>
                  <Seg $w={33}>
                    <svg width="16" height="16" viewBox="0 0 16 16"><path d="M3 8l5-5 5 5-4 4z" fill="#f1f4f8" stroke="#73829a" /><rect y="12" x="0" width="16" height="4" fill="#a9a9a9" /></svg>
                    <Caret />
                  </Seg>
                  <Seg $w={31}>
                    <svg width="16" height="16" viewBox="0 0 16 16"><path d="M3 11L8 1l5 10M5 7h6" fill="none" stroke="#7c8ca2" strokeWidth="2" /><rect y="12" x="0" width="16" height="4" fill="#a9a9a9" /></svg>
                    <Caret />
                  </Seg>
                </BtnGroup>
              </ToolRow>
            </Toolbox>
          </GroupBody>
          <GroupLabel $launch>Font<Launcher /></GroupLabel>
        </Group>

        <Group $w={250}>
          <GroupBody>
            <Toolbox $pl={4}>
              <ToolRow>
                <BtnGroup>
                  <Seg $w={22}><Lines kind="v" valign="top" /></Seg>
                  <Seg $w={22}><Lines kind="v" /></Seg>
                  <Seg $w={21}><Lines kind="v" valign="bottom" /></Seg>
                </BtnGroup>
                <BtnGroup>
                  <Seg $w={30}><OrientIcon /><Caret $ml={1} /></Seg>
                </BtnGroup>
              </ToolRow>
              <ToolRow>
                <BtnGroup>
                  <Seg $w={22}><Lines kind="l" /></Seg>
                  <Seg $w={22}><Lines kind="c" /></Seg>
                  <Seg $w={21}><Lines kind="r" /></Seg>
                </BtnGroup>
                <BtnGroup>
                  <Seg $w={21}><IndentIcon out /></Seg>
                  <Seg $w={21}><IndentIcon /></Seg>
                </BtnGroup>
              </ToolRow>
            </Toolbox>
            <Divider />
            <Toolbox $pl={0}>
              <DisabledRow><WrapIcon />Wrap Text</DisabledRow>
              <DisabledRow><MergeIcon />Merge &amp; Center<Caret /></DisabledRow>
            </Toolbox>
          </GroupBody>
          <GroupLabel $launch>Alignment<Launcher /></GroupLabel>
        </Group>

        <Group $w={135}>
          <GroupBody>
            <Toolbox>
              <ToolRow><Combo $w={127}>General<Caret /></Combo></ToolRow>
              <ToolRow>
                <BtnGroup>
                  <Seg $w={32} $font={`bold 14px/19px "Liberation Sans", sans-serif`}>$<Caret /></Seg>
                  <Seg $w={23} $font={`13px/19px "Liberation Sans", sans-serif`}>%</Seg>
                  <Seg $w={22} $font={`bold 13px/13px "Liberation Sans", sans-serif`}>,</Seg>
                </BtnGroup>
                <BtnGroup>
                  <Seg $w={21}><MiniStack>←.0<br />.00</MiniStack></Seg>
                  <Seg $w={21}><MiniStack>.00<br />→.0</MiniStack></Seg>
                </BtnGroup>
              </ToolRow>
            </Toolbox>
          </GroupBody>
          <GroupLabel $launch>Number<Launcher /></GroupLabel>
        </Group>

        <Group $w={174}>
          <GroupBody>
            <BigBtn $w={68} $ml={3}>
              <BigIcon><CondIcon /></BigIcon>
              <BigLabel>Conditional</BigLabel>
              <span>Formatting<Caret /></span>
            </BigBtn>
            <BigBtn $w={58}>
              <BigIcon><TableIcon /></BigIcon>
              <BigLabel>Format</BigLabel>
              <span>as Table<Caret /></span>
            </BigBtn>
            <BigBtn $w={40}>
              <BigIcon><StyleIcon /></BigIcon>
              <BigLabel>Cell</BigLabel>
              <span>Styles<Caret /></span>
            </BigBtn>
          </GroupBody>
          <GroupLabel>Styles</GroupLabel>
        </Group>

        <Group $w={133}>
          <GroupBody>
            {[['Insert', <InsertIcon key="i" />], ['Delete', <DeleteIcon key="d" />], ['Format', <FormatIcon key="f" />]].map(([t, ic], i) => (
              <BigBtn key={t} $w={42} $ml={i === 0 ? 3 : 0}>
                <BigIcon>{ic}</BigIcon>
                <BigLabel>{t}</BigLabel>
                <CaretLine><Caret $ml={0} /></CaretLine>
              </BigBtn>
            ))}
          </GroupBody>
          <GroupLabel>Cells</GroupLabel>
        </Group>

        <Group $w={176}>
          <GroupBody>
            <SmallCol $pl={6} $w={84}>
              <SmallRow>
                <svg width="14" height="14" viewBox="0 0 14 14"><path d="M2 2h10v2M12 12H2l5-5-5-5M2 12h10v-2" fill="none" stroke="#5f7390" strokeWidth="1.4" /></svg>
                &nbsp;AutoSum<Caret />
              </SmallRow>
              <SmallRow>
                <svg width="14" height="16" viewBox="0 0 14 16"><rect x=".5" y=".5" width="13" height="15" fill="#eef2f7" stroke="#98a7ba" /><path d="M4.5 3h5v5h2L7 13 2.5 8h2z" fill="#a6b4c6" /></svg>
                &nbsp;Fill<Caret />
              </SmallRow>
              <SmallRow>
                <svg width="14" height="14" viewBox="0 0 14 14"><path d="M1 9l7-8 5 3-7 9H3z" fill="#eef2f7" stroke="#98a7ba" /><path d="M1 13.5h12" stroke="#98a7ba" /></svg>
                &nbsp;Clear<Caret />
              </SmallRow>
            </SmallCol>
            <BigBtn $w={42}>
              <BigIcon><SortIcon /></BigIcon>
              <BigLabel>Sort &amp;</BigLabel>
              <span>Filter<Caret /></span>
            </BigBtn>
            <BigBtn $w={42} $on>
              <BigIcon><Binoculars /></BigIcon>
              <BigLabel>Find &amp;</BigLabel>
              <span>Select<Caret $on /></span>
            </BigBtn>
          </GroupBody>
          <GroupLabel>Editing</GroupLabel>
        </Group>
      </Ribbon>

      <FormulaBar>
        <NameBox>F26<DownTri /></NameBox>
        <FxPill><FxDot /><FxText>fx</FxText></FxPill>
        <FormulaInput>=F25+D26</FormulaInput>
        <Expand>
          <svg width="11" height="10" viewBox="0 0 11 10"><path d="M2 1l3.5 3L9 1M2 5l3.5 3L9 5" fill="none" stroke="#111" strokeWidth="1.5" /></svg>
        </Expand>
      </FormulaBar>

      <SheetArea>
        <GridWrap><SheetRows /></GridWrap>
        <VScroll>
          <SplitBox><SplitLine /></SplitBox>
          <TriUp />
          <VThumb><Grip /></VThumb>
          <TriDown />
        </VScroll>
      </SheetArea>

      <TabBar>
        <NavArrows>
          <svg width="8" height="8" viewBox="0 0 8 8"><path d="M0 0h1v8H0zM7 0v8L2 4z" fill="currentColor" /></svg>
          <svg width="8" height="8" viewBox="0 0 8 8"><path d="M6 0v8L1 4z" fill="currentColor" /></svg>
          <svg width="8" height="8" viewBox="0 0 8 8"><path d="M2 0v8l5-4z" fill="currentColor" /></svg>
          <svg width="8" height="8" viewBox="0 0 8 8"><path d="M7 0h1v8H7zM1 0v8l5-4z" fill="currentColor" /></svg>
        </NavArrows>
        {sheetTabs.map((s, i) => (
          <SheetTab key={s.t} $w={s.w} $on={s.on} $pr={s.pr} $pl={s.pl} $left={s.left}>{s.t}{i > 0 && !s.on && <TabSlant />}</SheetTab>
        ))}
        <MiniSplit />
        <HScroll>
          <TriLeft />
          <HThumb><HGrip /></HThumb>
          <TriRight />
          <HSplit />
        </HScroll>
      </TabBar>

      <StatusBar>
        <Ready>Ready</Ready>
        <StatusRight>
          <ViewBtns>
            <ViewBtn $on><svg width="14" height="12" viewBox="0 0 14 12"><path d="M.5.5h13v11H.5zM.5 4h13M.5 8h13M5 .5v11M9.5.5v11" fill="#fff" stroke="#6b6b6b" /></svg></ViewBtn>
            <ViewBtn><svg width="14" height="12" viewBox="0 0 14 12"><path d="M2.5.5h9v11h-9z" fill="#dfe3e9" stroke="#6b6b6b" /><path d="M5 4h4M5 6h4M5 8h4" stroke="#6b6b6b" /></svg></ViewBtn>
            <ViewBtn><svg width="14" height="12" viewBox="0 0 14 12"><path d="M.5.5h13v11H.5zM7 .5v9" fill="#f0f2f5" stroke="#6b6b6b" /><path d="M.5 9.5h13" stroke="#6b6b6b" strokeDasharray="2 1" /></svg></ViewBtn>
          </ViewBtns>
          <ZoomPct>100%</ZoomPct>
          <RoundBtn $ml={2}><svg width="9" height="3" viewBox="0 0 9 3"><path d="M0 0h9v3H0z" fill="#53709c" /></svg></RoundBtn>
          <Track><Knob /></Track>
          <RoundBtn><svg width="9" height="9" viewBox="0 0 9 9"><path d="M3 0h3v3h3v3H6v3H3V6H0V3h3z" fill="#53709c" /></svg></RoundBtn>
        </StatusRight>
      </StatusBar>

      <Taskbar>
        <StartBtn><WinLogo /></StartBtn>
        <SearchBox>
          <Search size={17} color="#222" strokeWidth={1.4} style={{ transform: 'scaleX(-1)' }} />
          Type here to search
        </SearchBox>
        <Tile>
          <svg width="16" height="16" viewBox="0 0 16 16"><circle cx="8" cy="8" r="6.5" fill="none" stroke="#111" strokeWidth="2.2" /></svg>
        </Tile>
        <Tile><TaskView /></Tile>
        <Tile><FaSteam size={23} color="#16203a" /></Tile>
        <Tile><EdgeIcon /></Tile>
        <Tile><MailIcon /></Tile>
        <Tile $run><FolderIcon /></Tile>
        <Tile><ZoomIcon /></Tile>
        <Tile $bg="#dfeaee">
          <WaIcon />
          <FaWhatsapp size={21} color="#25d366" style={{ position: 'absolute' }} />
        </Tile>
        <Tile $bg="#eaf2f4" $run $wide><ExcelIcon /></Tile>
        <Tile $run>
          <SiXampp size={24} color="#fff" style={{ background: '#e97b34', borderRadius: 4, padding: 2 }} />
        </Tile>
        <Tile $run><VsIcon /></Tile>
        <Tile $run><WordIcon /></Tile>
        <Tile $run $pt={2}><ChromeIcon /></Tile>
        <Tray>
          <TrayIcon><ChevronUp size={18} strokeWidth={1.4} /></TrayIcon>
          <TrayIcon><MeetIcon /></TrayIcon>
          <TrayIcon>
            <svg width="18" height="12" viewBox="0 0 18 12"><path d="M6.5 3.5h10v7h-10z" fill="none" stroke="#111" /><path d="M7 4h5v6H7zM2 0v3M5 0v3M.5 3h6v3c0 2-3 2-3 2v3" fill="#111" stroke="#111" /></svg>
          </TrayIcon>
          <Clock>7:49 PM<br />8/11/2022</Clock>
          <Notif>
            <svg width="17" height="15" viewBox="0 0 17 15"><path d="M0 0h17v11H6l-3 3v-3H0z" fill="#111" /><path d="M3 3h11M3 5.5h11M3 8h8" stroke="#cfe0e4" /></svg>
            <NotifBadge>4</NotifBadge>
          </Notif>
        </Tray>
      </Taskbar>
    </Page>
  );
}
